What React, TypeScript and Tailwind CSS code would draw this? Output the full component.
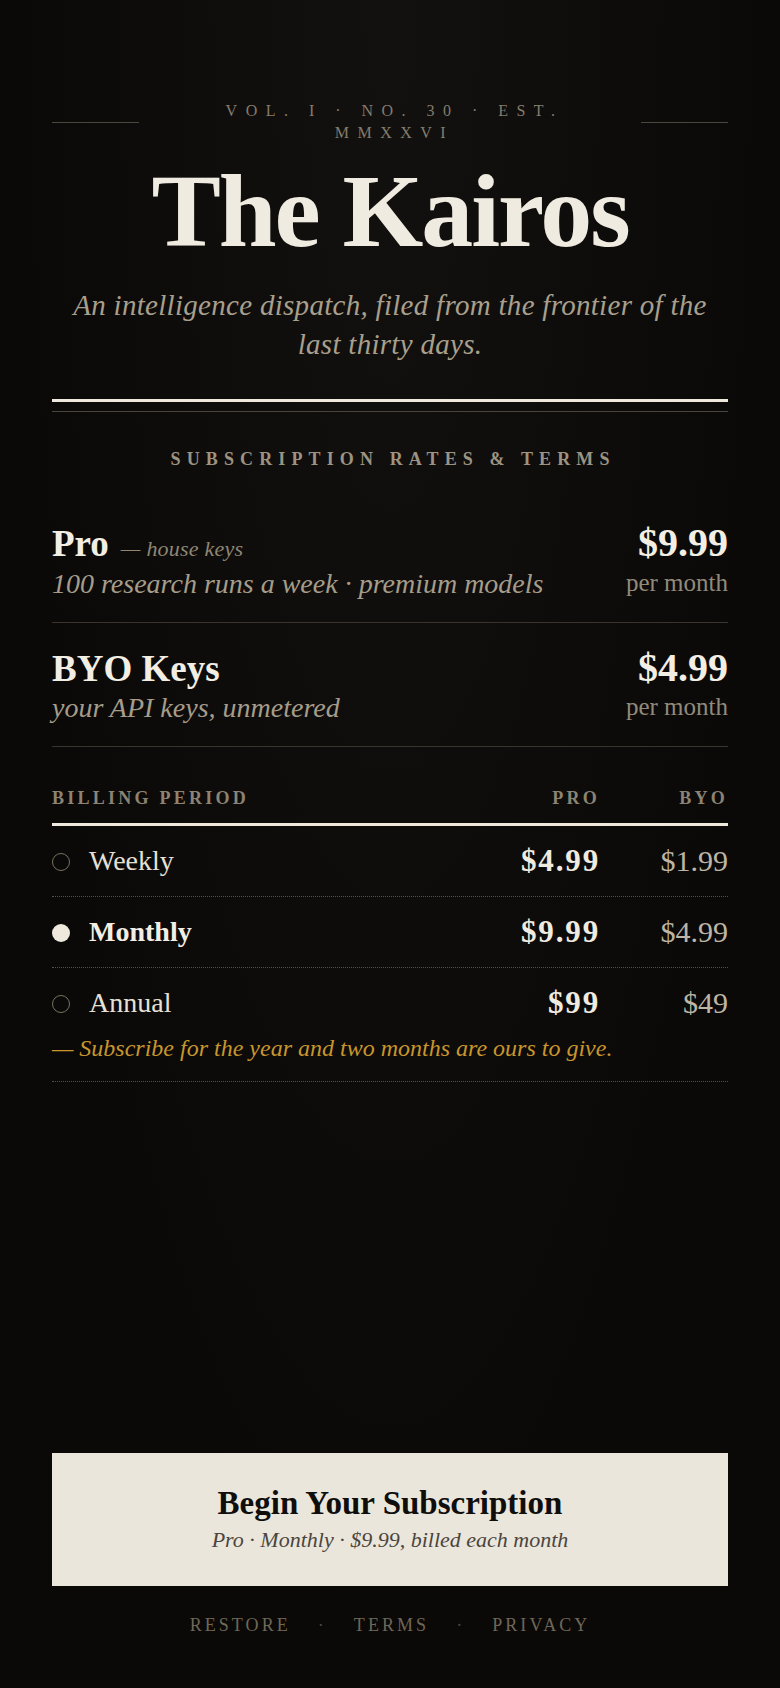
const plans = [
  { name: "Pro", tag: "house keys", note: "100 research runs a week · premium models", price: "$9.99" },
  { name: "BYO Keys", note: "your API keys, unmetered", price: "$4.99" },
];

const periods = [
  { label: "Weekly", pro: "$4.99", byo: "$1.99" },
  { label: "Monthly", pro: "$9.99", byo: "$4.99", selected: true },
  { label: "Annual", pro: "$99", byo: "$49", note: "— Subscribe for the year and two months are ours to give." },
];

export default function App() {
  return (
    <div className="min-h-screen flex flex-col bg-[#0a0908] bg-[radial-gradient(ellipse_at_top,#12110f_0%,#0a0908_70%)] px-[52px] pt-[100px] pb-[54px] font-['Liberation_Serif','Times_New_Roman',serif]">
      {/* Masthead */}
      <header>
        <div className="flex items-center gap-4">
          <div className="w-[87px] h-px bg-[#4d463d]" />
          <p className="flex-1 text-center text-[16px] leading-[22px] tracking-[0.53em] text-[#857c6c]">
            <span className="block mx-auto max-w-[380px] pl-[9px]">VOL. I · NO. 30 · EST. MMXXVI</span>
          </p>
          <div className="w-[87px] h-px bg-[#4d463d]" />
        </div>
        <h1 className="mt-[15px] text-center text-[104px] leading-none font-bold tracking-[-0.02em] text-[#f0ebe0]">
          The Kairos
        </h1>
        <p className="mt-[23px] px-[14px] text-center italic text-[29px] leading-[39px] tracking-[0.01em] text-[#a89f8c]">
          An intelligence dispatch, filed from the frontier of the last thirty days.
        </p>
        <div className="mt-[35px] h-[3px] bg-[#efe9dd]" />
        <div className="mt-[9px] h-px bg-[#4a433a]" />
      </header>

      <h2 className="mt-[38px] pl-[0.34em] text-center text-[18px] leading-[18px] font-bold tracking-[0.34em] text-[#9c9382]">
        SUBSCRIPTION RATES &amp; TERMS
      </h2>

      {/* Plans */}
      <div className="mt-[30px]">
        {plans.map((plan) => (
          <div key={plan.name} className="border-b border-[#3a342c] pt-[25px] pb-[20px]">
            <div className="flex items-baseline justify-between">
              <div className="flex items-baseline">
                <span className="text-[37px] leading-[40px] font-bold text-[#f3eee4]">{plan.name}</span>
                {plan.tag && (
                  <span className="ml-3 italic text-[22px] tracking-[0.01em] text-[#8f8673]">— {plan.tag}</span>
                )}
              </div>
              <span className="text-[40px] leading-[40px] font-bold text-[#f3eee4]">{plan.price}</span>
            </div>
            <div className="mt-[2px] flex items-baseline justify-between">
              <span className="italic text-[28px] leading-[34px] text-[#a59c8a]">{plan.note}</span>
              <span className="relative -top-[2px] text-[25px] leading-[34px] text-[#928a79]">per month</span>
            </div>
          </div>
        ))}
      </div>

      {/* Billing period table */}
      <div className="mt-[42px] flex items-baseline text-[18px] leading-[18px] font-bold tracking-[0.18em] text-[#8c8372]">
        <span className="flex-1">BILLING PERIOD</span>
        <span className="w-32 text-right">PRO</span>
        <span className="w-32 text-right">BYO</span>
      </div>
      <div className="mt-[16px] h-[3px] bg-[#efe9dd]" />
      <div>
        {periods.map((p) => (
          <div key={p.label} className="border-b border-dotted border-[#574f44] py-[21px]">
            <div className="flex items-center h-[28px]">
              <span
                className={
                  p.selected
                    ? "mr-[19px] mt-[2px] size-[18px] rounded-full bg-[#efe9dd]"
                    : "mr-[19px] mt-[2px] size-[18px] rounded-full border-[1.5px] border-[#7a7060]"
                }
              />
              <span
                className={
                  p.selected
                    ? "flex-1 text-[28px] leading-[28px] font-bold text-[#f3eee4]"
                    : "flex-1 text-[28px] leading-[28px] text-[#e6e0d4]"
                }
              >
                {p.label}
              </span>
              <span className="w-32 text-right text-[31px] leading-[28px] font-bold tracking-[0.06em] text-[#f0ebe0]">
                {p.pro}
              </span>
              <span className="w-32 text-right text-[30px] leading-[28px] text-[#bdb5a5]">{p.byo}</span>
            </div>
            {p.note && (
              <p className="mt-[19px] italic text-[24px] leading-[24px] text-[#c8962c]">{p.note}</p>
            )}
          </div>
        ))}
      </div>

      <div className="flex-1" />

      {/* Call to action */}
      <button className="w-full bg-[#ebe6dc] pt-[34px] pb-[33px] text-center">
        <div className="text-[33px] leading-[32px] font-bold text-[#0f0e0c]">Begin Your Subscription</div>
        <div className="mt-[8px] italic text-[22px] leading-[26px] text-[#4a453d]">
          Pro · Monthly · $9.99, billed each month
        </div>
      </button>

      <nav className="mt-[30px] flex items-baseline justify-center text-[18px] leading-[18px] tracking-[0.17em] text-[#6f6757]">
        <span>RESTORE</span>
        <span className="mx-[27px] text-[#4a443b]">·</span>
        <span>TERMS</span>
        <span className="mx-[27px] text-[#4a443b]">·</span>
        <span>PRIVACY</span>
      </nav>
    </div>
  );
}
